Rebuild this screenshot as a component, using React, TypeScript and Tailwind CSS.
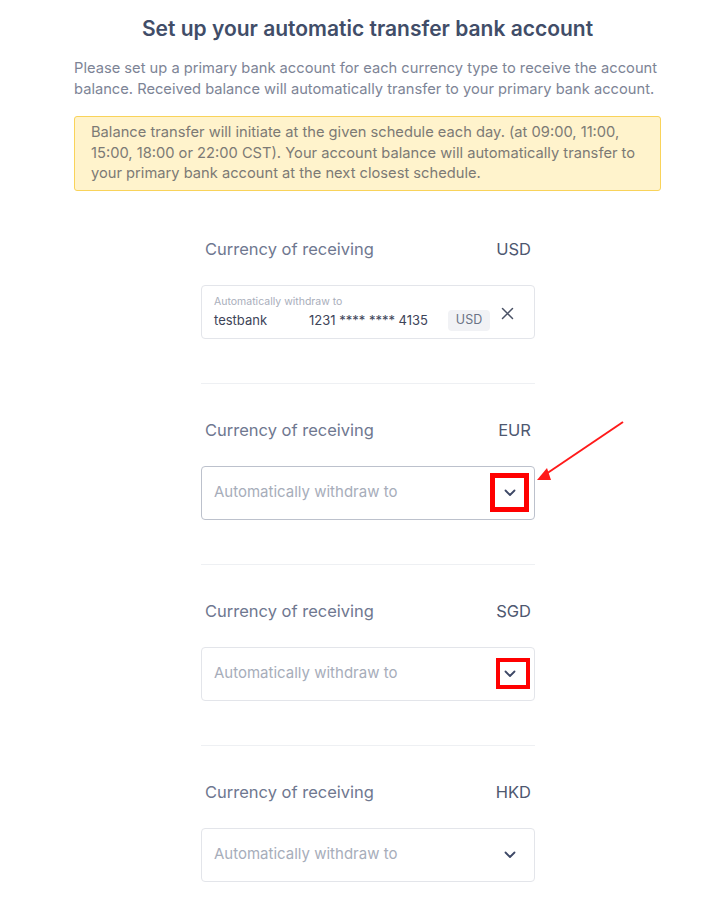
import React from "react";

const font = { fontFamily: "Inter, 'Noto Sans', sans-serif" };

const currencies = [
  { code: "USD", state: "filled" },
  { code: "EUR", state: "focus" },
  { code: "SGD", state: "marked" },
  { code: "HKD", state: "empty" },
];

function Chevron() {
  return (
    <svg width="12" height="8" viewBox="0 0 12 8" fill="none">
      <path d="M1.5 1.5 6 6l4.5-4.5" stroke="#3d4866" strokeWidth="1.8" strokeLinecap="round" strokeLinejoin="round" />
    </svg>
  );
}

function FilledInput() {
  return (
    <div className="h-[54px] rounded-[4px] border border-[#e3e5ea] pl-[12px] pr-[16px] pt-[9px]">
      <div className="text-[10.5px] leading-[14px] text-[#a9aebb]">Automatically withdraw to</div>
      <div className="mt-[1px] flex h-[22px] items-center">
        <span className="w-[95px] text-[13px] text-[#3d4458]">testbank</span>
        <span className="w-[139px] text-[13px] text-[#3d4458]">1231 **** **** 4135</span>
        <span className="flex h-[21px] w-[42px] items-center justify-center rounded-[4px] bg-[#f1f2f5] text-[12.5px] text-[#6b7385]">
          USD
        </span>
        <svg className="ml-[11px] -mt-[14px]" width="13" height="13" viewBox="0 0 13 13" fill="none">
          <path d="M1.5 1.5l10 10M11.5 1.5l-10 10" stroke="#4a5266" strokeWidth="1.5" strokeLinecap="round" />
        </svg>
      </div>
    </div>
  );
}

function SelectInput({ state }: { state: string }) {
  return (
    <div
      className={
        state === "focus"
          ? "relative flex h-[54px] items-center rounded-[4px] border border-[#bcc1cc] pl-[12px] pr-[18px]"
          : "relative flex h-[54px] items-center rounded-[4px] border border-[#e3e5ea] pl-[12px] pr-[18px]"
      }
    >
      <span className="flex-1 text-[15px] text-[#a7adba]">Automatically withdraw to</span>
      <Chevron />
      {state === "focus" && (
        <>
          <div className="absolute left-[288px] top-[6px] h-[39px] w-[39px] border-[5px] border-[#ff0000]" />
          <svg className="absolute left-[329px] top-[-51px] overflow-visible" width="100" height="72" viewBox="0 0 100 72" fill="none">
            <path d="M92 6 15 58" stroke="#ff1a1a" strokeWidth="2" />
            <path d="M6 64 16 52 20 64Z" fill="#ff1a1a" />
          </svg>
        </>
      )}
      {state === "marked" && (
        <div className="absolute left-[294px] top-[10px] h-[31px] w-[34px] border-[4px] border-[#ff0000]" />
      )}
    </div>
  );
}

export default function App() {
  return (
    <main className="min-h-[920px] bg-white pt-[15px]" style={font}>
      <div className="ml-[74px] w-[587px]">
        <h1 className="text-center text-[21px] font-semibold leading-[28px] text-[#414d68]">
          Set up your automatic transfer bank account
        </h1>
        <p className="mt-[15px] text-[14.7px] leading-[21px] text-[#7d8496]">
          Please set up a primary bank account for each currency type to receive the account
          <br />
          balance. Received balance will automatically transfer to your primary bank account.
        </p>
        <div className="mt-[16px] rounded-[3px] border border-[#f9d35a] bg-[#fff3cc] pb-[6px] pl-[16px] pr-[12px] pt-[5px] text-[14.7px] leading-[20.5px] text-[#7c7a75]">
          Balance transfer will initiate at the given schedule each day. (at 09:00, 11:00,
          <br />
          15:00, 18:00 or 22:00 CST). Your account balance will automatically transfer to
          <br />
          your primary bank account at the next closest schedule.
        </div>
      </div>

      <div className="ml-[201px] mt-[47px] w-[334px]">
        {currencies.map((c, i) => (
          <section key={c.code} className={i > 0 ? "border-t border-[#eef0f3] pt-[35px]" : ""}>
            <div className="flex h-[24px] items-center justify-between px-[4px] text-[16.5px]">
              <span className="text-[#6f7890]">Currency of receiving</span>
              <span className="text-[#4e5870]">{c.code}</span>
            </div>
            <div className="mt-[23px]">
              {c.state === "filled" ? <FilledInput /> : <SelectInput state={c.state} />}
            </div>
            {i < currencies.length - 1 && <div className="h-[44px]" />}
          </section>
        ))}
      </div>
    </main>
  );
}
